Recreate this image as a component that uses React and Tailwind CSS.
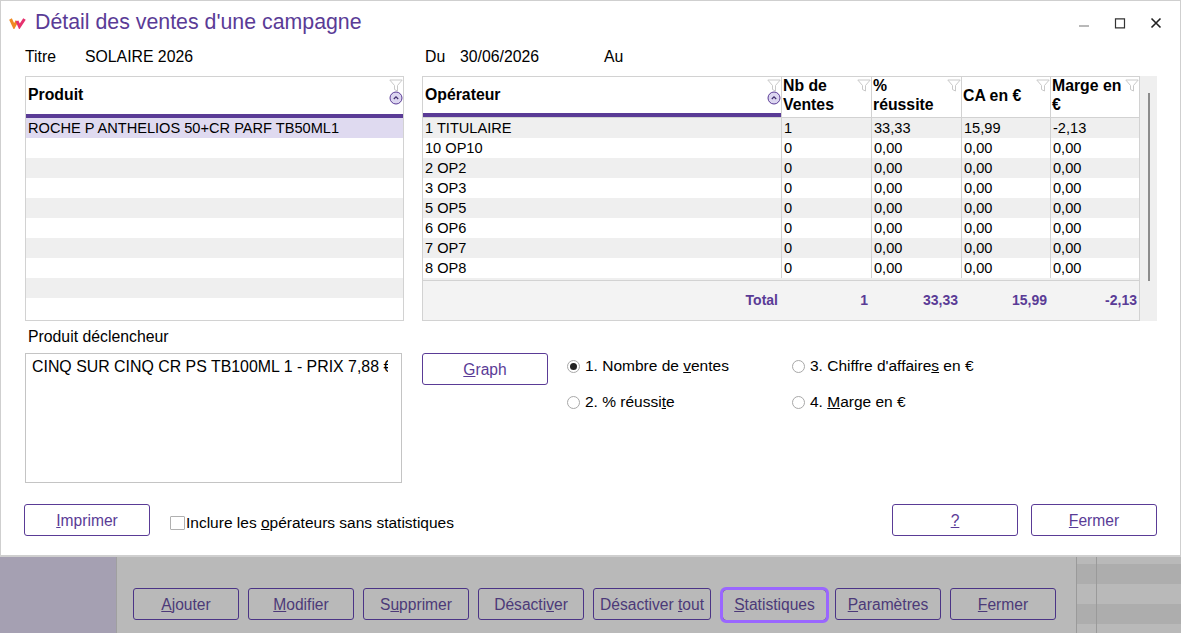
const operators = [
  ["1 TITULAIRE", "1", "33,33", "15,99", "-2,13"],
  ["10 OP10", "0", "0,00", "0,00", "0,00"],
  ["2 OP2", "0", "0,00", "0,00", "0,00"],
  ["3 OP3", "0", "0,00", "0,00", "0,00"],
  ["5 OP5", "0", "0,00", "0,00", "0,00"],
  ["6 OP6", "0", "0,00", "0,00", "0,00"],
  ["7 OP7", "0", "0,00", "0,00", "0,00"],
  ["8 OP8", "0", "0,00", "0,00", "0,00"],
];

function Filter() {
  return (
    <svg width="14" height="13" viewBox="0 0 14 13" className="absolute top-[2px] right-0" fill="none" stroke="#c9c9c9" strokeWidth="1">
      <path d="M.8 1h12.4L8.5 6.5V12L5.5 10.5v-4z" />
    </svg>
  );
}

function Sort() {
  return (
    <svg width="14" height="14" viewBox="0 0 14 14" className="absolute top-[14px] right-0">
      <circle cx="7" cy="7" r="6" fill="#dcd6f0" stroke="#5a3b96" strokeWidth="1" />
      <path d="M4.8 8 7 5.8 9.2 8" fill="none" stroke="#3d2a6b" strokeWidth="1.2" />
    </svg>
  );
}

function Btn({ label, u, rest, dim, focus, className = "" }) {
  return (
    <button
      className={`h-8 rounded-[3px] border text-[15.6px] leading-none flex items-center justify-center ${
        dim ? "border-[#4b3486] text-[#4c3a78]" : "border-[#5a3b96] text-[#5a3b96] bg-white"
      } ${focus ? "outline-[3px] outline-[#9a66ff] -outline-offset-[1px] rounded-[4px] pb-[1px]" : "pt-[1px]"} ${className}`}
    >
      <span className="whitespace-pre">
        {label}
        <u>{u}</u>
        {rest}
      </span>
    </button>
  );
}

function Radio({ checked, children }) {
  return (
    <label className="flex items-center gap-[5px] h-5 text-[15.5px] text-black">
      <span className="w-[13px] h-[13px] rounded-full border border-[#a8a8a8] flex items-center justify-center bg-white">
        {checked && <span className="w-[7px] h-[7px] rounded-full bg-[#222]" />}
      </span>
      <span>{children}</span>
    </label>
  );
}

export default function App() {
  return (
    <div className="w-[1181px] h-[633px] overflow-hidden flex flex-col font-['Liberation_Sans',Arial,sans-serif] text-black bg-[#b9b9b9]">
      {/* Dialog */}
      <div className="h-[557px] shrink-0 bg-white border border-[#cfcfcf] border-b-2 flex flex-col">
        {/* Title bar */}
        <div className="h-[40px] shrink-0 flex items-center pl-[8px] pt-[4px]">
          <svg width="18" height="12" viewBox="0 0 18 12" className="mr-[8px]">
            <path d="M1.5 2 5 9.5 8 4" fill="none" stroke="#f08a24" strokeWidth="3" />
            <path d="M8 4 10.5 9.5 15.5 2" fill="none" stroke="#e6326e" strokeWidth="3" />
          </svg>
          <h1 className="text-[21.33px] leading-none font-normal text-[#5a3b96]">Détail des ventes d'une campagne</h1>
          <div className="ml-auto flex items-center gap-[24px] pr-[18px] pb-[1px]">
            <svg width="12" height="12" viewBox="0 0 12 12">
              <path d="M1 9h10" stroke="#a8a8a8" strokeWidth="1.6" />
            </svg>
            <svg width="12" height="12" viewBox="0 0 12 12">
              <path d="M1.5 1.8h9v9h-9z" fill="none" stroke="#333" strokeWidth="1.2" />
            </svg>
            <svg width="12" height="12" viewBox="0 0 12 12">
              <path d="M1.5 1.5l9 9M10.5 1.5l-9 9" fill="none" stroke="#222" strokeWidth="1.6" />
            </svg>
          </div>
        </div>

        {/* Title row */}
        <div className="h-[35px] shrink-0 flex items-start pt-[7px] pl-[24px] text-[15.8px] leading-[18px]">
          <span className="w-[60px]">Titre</span>
          <span className="w-[340px]">SOLAIRE 2026</span>
          <span className="w-[35px]">Du</span>
          <span className="w-[144px]">30/06/2026</span>
          <span>Au</span>
        </div>

        {/* Tables */}
        <div className="flex pl-[24px] h-[245px] shrink-0">
          <div className="w-[379px] h-full border border-[#d2d2d2] flex flex-col">
            <div className="relative h-[37px] shrink-0 flex items-center pl-[2px] pb-[2px] text-[15.8px] font-bold">
              Produit
              <Filter />
              <Sort />
            </div>
            <div className="h-1 shrink-0 bg-[#5a3b96]" />
            <div className="h-5 shrink-0 bg-[#dfdaf0] pl-[2px] text-[14.6px] leading-5">ROCHE P ANTHELIOS 50+CR PARF TB50ML1</div>
            {[0, 1, 2, 3, 4, 5, 6, 7, 8].map((i) => (
              <div key={i} className={`h-5 shrink-0 ${i % 2 === 0 ? "bg-white" : "bg-[#efefef]"}`} />
            ))}
          </div>

          <div className="w-[18px]" />

          <div className="w-[718px] h-full border border-[#d2d2d2] flex flex-col">
            <div className="flex h-[41px] shrink-0 text-[15.8px] font-bold leading-[19px] border-b border-[#d2d2d2]">
              <div className="relative w-[358px] shrink-0 flex flex-col">
                <div className="flex-1 flex items-center pl-[2px] pb-[2px]">Opérateur</div>
                <div className="h-1 bg-[#5a3b96]" />
                <Filter />
                <Sort />
              </div>
              <div className="relative w-[90px] shrink-0 border-l border-[#d2d2d2] pl-[1px]"><div className="-mt-px">Nb de<br />Ventes</div><Filter /></div>
              <div className="relative w-[90px] shrink-0 border-l border-[#d2d2d2] pl-[1px]"><div className="-mt-px">%<br />réussite</div><Filter /></div>
              <div className="relative w-[89px] shrink-0 border-l border-[#d2d2d2] pl-[1px] flex items-center pb-[3px]">CA en €<Filter /></div>
              <div className="relative w-[89px] shrink-0 border-l border-[#d2d2d2] pl-[1px]"><div className="-mt-px">Marge en<br />€</div><Filter /></div>
            </div>
            {operators.map((row, i) => (
              <div key={row[0]} className={`flex h-5 shrink-0 text-[14.6px] leading-5 ${i % 2 === 0 ? "bg-[#efefef]" : "bg-white"}`}>
                <div className="w-[358px] shrink-0 pl-[2px]">{row[0]}</div>
                <div className="w-[90px] shrink-0 border-l border-[#d2d2d2] pl-[2px]">{row[1]}</div>
                <div className="w-[90px] shrink-0 border-l border-[#d2d2d2] pl-[2px]">{row[2]}</div>
                <div className="w-[89px] shrink-0 border-l border-[#d2d2d2] pl-[2px]">{row[3]}</div>
                <div className="w-[89px] shrink-0 border-l border-[#d2d2d2] pl-[2px]">{row[4]}</div>
              </div>
            ))}
            <div className="h-[2px] shrink-0 bg-[#efefef]" />
            <div className="flex-1 border-t border-[#d2d2d2] bg-[#f3f3f3] flex items-center text-[14px] font-bold text-[#5a3b96] text-right pb-[1px]">
              <div className="w-[355px] shrink-0">Total</div>
              <div className="w-[90px] shrink-0">1</div>
              <div className="w-[90px] shrink-0">33,33</div>
              <div className="w-[89px] shrink-0">15,99</div>
              <div className="w-[90px] shrink-0">-2,13</div>
            </div>
          </div>

          {/* Scrollbar */}
          <div className="w-[17px] h-full bg-[#efefef] flex justify-center pt-[17px]">
            <div className="w-[2px] h-[188px] bg-[#8c8c8c]" />
          </div>
        </div>

        {/* Trigger product + graph options */}
        <div className="flex pl-[24px] pt-[7px] h-[162px] shrink-0">
          <div className="w-[377px] shrink-0 flex flex-col">
            <div className="pl-[3px] h-[25px] text-[15.8px] leading-[18px]">Produit déclencheur</div>
            <div className="h-[130px] border border-[#c4c4c4] pl-[6px] pr-[13px] pt-[4px]">
              <div className="text-[15.9px] leading-[18px] overflow-hidden whitespace-nowrap">
                CINQ SUR CINQ CR PS TB100ML 1 - PRIX 7,88 €
              </div>
            </div>
          </div>
          <div className="w-[20px] shrink-0" />
          <div className="pt-[25px] flex">
            <Btn label="" u="G" rest="raph" className="w-[126px]" />
            <div className="ml-[19px] w-[225px] pt-[3px] flex flex-col gap-4">
              <Radio checked>1. Nombre de <u>v</u>entes</Radio>
              <Radio>2. % réussi<u>t</u>e</Radio>
            </div>
            <div className="pt-[3px] flex flex-col gap-4">
              <Radio>3. Chiffre d'affaire<u>s</u> en €</Radio>
              <Radio>4. <u>M</u>arge en €</Radio>
            </div>
          </div>
        </div>

        {/* Dialog footer */}
        <div className="flex items-start pl-[23px] pt-[21px]">
          <Btn label="" u="I" rest="mprimer" className="w-[126px]" />
          <label className="ml-[20px] mt-[10px] flex items-center text-[15.5px] leading-[18px]">
            <span className="w-[15px] h-[14px] border border-[#b0b0b0] rounded-[1px] mr-[1px]" />
            <span>Inclure les <u>o</u>pérateurs sans statistiques</span>
          </label>
          <Btn label="" u="?" rest="" className="w-[126px] ml-auto" />
          <Btn label="" u="F" rest="ermer" className="w-[126px] ml-[13px] mr-[23px]" />
        </div>
      </div>

      {/* Window behind the dialog */}
      <div className="flex-1 flex">
        <div className="w-[117px] shrink-0 bg-[#a5a0b2] border-r border-[#a0a0a0]" />
        <div className="w-[959px] shrink-0 flex items-start pt-[31px] pl-[16px]">
          <Btn dim label="" u="A" rest="jouter" className="w-[106px] mr-[9px]" />
          <Btn dim label="" u="M" rest="odifier" className="w-[106px] mr-[9px]" />
          <Btn dim label="S" u="u" rest="pprimer" className="w-[106px] mr-[9px]" />
          <Btn dim label="Désacti" u="v" rest="er" className="w-[106px] mr-[9px]" />
          <Btn dim label="Désactiver " u="t" rest="out" className="w-[118px] mr-[9px]" />
          <Btn dim focus label="" u="S" rest="tatistiques" className="w-[105px] ml-[2px] mr-[8px] mt-[1px]" />
          <Btn dim label="" u="P" rest="aramètres" className="w-[106px] mr-[9px]" />
          <Btn dim label="" u="F" rest="ermer" className="w-[106px]" />
        </div>
        <div className="flex-1 flex flex-col border-l border-[#9a9a9a] relative">
          <div className="absolute top-0 bottom-0 left-[19px] w-px bg-[#9a9a9a]" />
          <div className="h-[7px] bg-[#b9b9b9]" />
          <div className="h-5 bg-[#adadad]" />
          <div className="h-5 bg-[#b9b9b9]" />
          <div className="h-5 bg-[#adadad]" />
          <div className="flex-1 bg-[#b9b9b9]" />
        </div>
      </div>
    </div>
  );
}
